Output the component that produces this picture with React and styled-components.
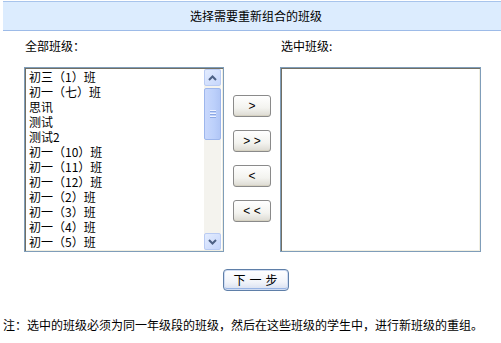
import React from "react";
import styled, { createGlobalStyle } from "styled-components";

const Global = createGlobalStyle`
  html, body { margin: 0; padding: 0; background: #fff; }
  body {
    font-family: "Noto Sans CJK SC", "Liberation Sans", sans-serif;
    font-size: 12px;
    color: #000;
  }
`;

const Page = styled.div`
  width: 501px;
  height: 343px;
  overflow: hidden;
`;

const Header = styled.div`
  margin: 1px 0 0 3px;
  height: 28px;
  background: #dcecfe;
  border-top: 1px solid #a8c4ec;
  border-bottom: 1px solid #9dbbe8;
  display: flex;
  align-items: center;
  justify-content: center;
  padding-left: 8px;
  font-size: 12px;
  line-height: 14px;
`;

const Main = styled.div`
  display: grid;
  grid-template-columns: 200px 56px 201px;
  grid-template-rows: 14px 185px;
  row-gap: 14px;
  padding: 8px 0 0 24px;
`;

const Label = styled.div`
  line-height: 14px;
  padding-left: 1px;
  grid-column: ${(p) => p.$col};
`;

const ListBox = styled.div`
  box-sizing: border-box;
  height: 185px;
  border: 1px solid #7f9db9;
  box-shadow: inset 1px 1px 0 #716f64, inset -1px -1px 0 #f1efe2;
  background: #fff;
  display: flex;
  overflow: hidden;
`;

const Items = styled.div`
  flex: 1;
  padding: 1px 0 0 4px;
  overflow: hidden;
`;

const Item = styled.div`
  height: 15px;
  line-height: 15px;
  white-space: nowrap;
  overflow: hidden;
`;

const ScrollBar = styled.div`
  width: 17px;
  margin: 1px 2px 1px 0;
  background: #f4f3ee;
  display: flex;
  flex-direction: column;
`;

const ScrollBtn = styled.div`
  box-sizing: border-box;
  height: 17px;
  border: 1px solid #b9cbf3;
  border-radius: 2px;
  background: linear-gradient(135deg, #e3ecfe 0%, #c6d6fc 100%);
  display: flex;
  align-items: center;
  justify-content: center;
`;

const Thumb = styled.div`
  box-sizing: border-box;
  height: 52px;
  margin-top: 2px;
  border: 1px solid #9db6ec;
  border-radius: 2px;
  background: linear-gradient(90deg, #c9d8fc 0%, #bcd0fb 60%, #b1c6f6 100%);
  display: flex;
  flex-direction: column;
  align-items: center;
  justify-content: center;
  gap: 1px;
`;

const Grip = styled.div`
  width: 6px;
  height: 1px;
  background: #eef3fe;
  border-bottom: 1px solid #8ca8e4;
`;

const Track = styled.div`
  flex: 1;
`;

const BtnCol = styled.div`
  display: flex;
  flex-direction: column;
  align-items: center;
  gap: 13px;
  padding-top: 28px;
`;

const MoveBtn = styled.button`
  box-sizing: border-box;
  width: 38px;
  height: 22px;
  padding: 0;
  border: 1px solid #8a8a8a;
  border-radius: 3px;
  background: linear-gradient(180deg, #ffffff 0%, #f3f3ef 60%, #dcdad2 100%);
  box-shadow: inset 0 -1px 0 #d6d2c2;
  font-family: "Liberation Sans", sans-serif;
  font-size: 12px;
  color: #000;
  line-height: 20px;
  letter-spacing: 0px;
`;

const Footer = styled.div`
  display: flex;
  justify-content: center;
  padding: 17px 0 0 10px;
`;

const NextBtn = styled.button`
  box-sizing: border-box;
  width: 66px;
  height: 22px;
  padding: 0;
  border: 1px solid #5f7fa8;
  border-radius: 4px;
  background: linear-gradient(180deg, #ffffff 0%, #f1f4fa 60%, #d5def0 100%);
  box-shadow: inset 0 0 0 1px #cfdcf3, inset 0 -2px 0 #98b4e4;
  font-family: "Noto Sans CJK SC", sans-serif;
  font-size: 12px;
  line-height: 18px;
  letter-spacing: 4px;
  text-indent: 4px;
  color: #000;
`;

const Note = styled.div`
  margin: 28px 0 0 3px;
  line-height: 12px;
  white-space: nowrap;
`;

const Arrow = ({ up }) => (
  <svg width="9" height="6" viewBox="0 0 9 6">
    <path
      d={up ? "M1 5 L4.5 1.5 L8 5" : "M1 1 L4.5 4.5 L8 1"}
      fill="none"
      stroke="#4d6185"
      strokeWidth="2"
    />
  </svg>
);

const classes = [
  "初三（1）班",
  "初一（七）班",
  "思讯",
  "测试",
  "测试2",
  "初一（10）班",
  "初一（11）班",
  "初一（12）班",
  "初一（2）班",
  "初一（3）班",
  "初一（4）班",
  "初一（5）班",
];

export default function App() {
  return (
    <Page>
      <Global />
      <Header>选择需要重新组合的班级</Header>
      <Main>
        <Label $col={1}>全部班级：</Label>
        <Label $col={3}>选中班级:</Label>
        <ListBox>
          <Items>
            {classes.map((c) => (
              <Item key={c}>{c}</Item>
            ))}
          </Items>
          <ScrollBar>
            <ScrollBtn>
              <Arrow up />
            </ScrollBtn>
            <Thumb>
              <Grip />
              <Grip />
              <Grip />
            </Thumb>
            <Track />
            <ScrollBtn>
              <Arrow />
            </ScrollBtn>
          </ScrollBar>
        </ListBox>
        <BtnCol>
          <MoveBtn>&gt;</MoveBtn>
          <MoveBtn>&gt; &gt;</MoveBtn>
          <MoveBtn>&lt;</MoveBtn>
          <MoveBtn>&lt; &lt;</MoveBtn>
        </BtnCol>
        <ListBox />
      </Main>
      <Footer>
        <NextBtn>下一步</NextBtn>
      </Footer>
      <Note>
        注：选中的班级必须为同一年级段的班级，然后在这些班级的学生中，进行新班级的重组。
      </Note>
    </Page>
  );
}
